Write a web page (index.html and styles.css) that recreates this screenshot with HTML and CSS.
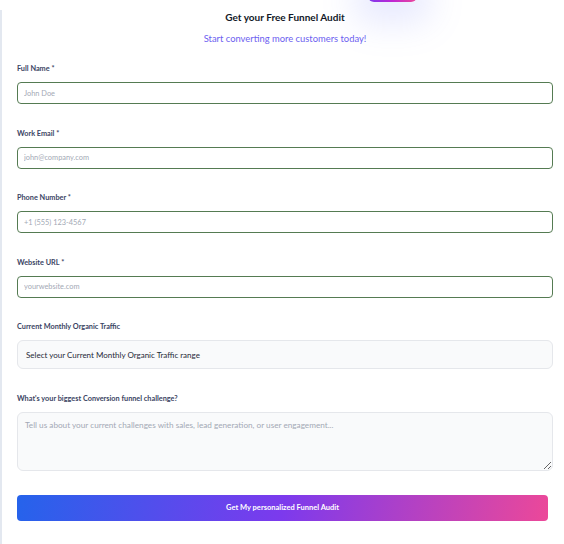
FILE: index.html
```html
<!DOCTYPE html>
<html lang="en">
<head>
<meta charset="utf-8">
<title>Get your Free Funnel Audit</title>
<link rel="stylesheet" href="styles.css">
</head>
<body>
<div class="glow"></div>
<div class="page">
  <div class="card">
    <header class="header">
      <h1 class="title">Get your Free Funnel Audit</h1>
      <p class="subtitle">Start converting more customers today!</p>
    </header>
    <form class="form">
      <div class="field">
        <label class="label">Full Name *</label>
        <input class="input" type="text" placeholder="John Doe">
      </div>
      <div class="field">
        <label class="label">Work Email *</label>
        <input class="input" type="email" placeholder="john@company.com">
      </div>
      <div class="field">
        <label class="label">Phone Number *</label>
        <input class="input" type="tel" placeholder="+1 (555) 123-4567">
      </div>
      <div class="field">
        <label class="label">Website URL *</label>
        <input class="input" type="text" placeholder="yourwebsite.com">
      </div>
      <div class="field">
        <label class="label">Current Monthly Organic Traffic</label>
        <select class="select">
          <option>Select your Current Monthly Organic Traffic range</option>
        </select>
      </div>
      <div class="field">
        <label class="label">What's your biggest Conversion funnel challenge?</label>
        <textarea class="textarea" placeholder="Tell us about your current challenges with sales, lead generation, or user engagement..."></textarea>
      </div>
      <button class="submit" type="button">Get My personalized Funnel Audit</button>
    </form>
  </div>
</div>
</body>
</html>
```

FILE: styles.css
```css
* { box-sizing: border-box; }
html, body { margin: 0; padding: 0; background: #ffffff; }
body { font-family: Lato, "Open Sans", "Liberation Sans", sans-serif; color: #1f2937; position: relative; overflow: hidden; height: 544px; }

.glow {
  position: absolute;
  left: 368px;
  top: -22px;
  width: 49px;
  height: 24px;
  border-radius: 6px;
  background: linear-gradient(90deg, #7c3aed, #c026d3, #ec4899);
  box-shadow: 0 8px 34px 14px rgba(129, 140, 248, 0.18);
}

.page { padding-top: 10px; }

.card {
  border-left: 2px solid #e3e8f0;
  padding: 0 11px 30px 15px;
  min-height: 540px;
}

.header { text-align: center; }
.title {
  margin: 0;
  font-size: 10px;
  line-height: 14px;
  font-weight: 700;
  color: #111827;
}
.subtitle {
  margin: 8px 0 0;
  font-size: 9.4px;
  line-height: 14px;
  color: #6d5ff0;
}

.form {
  display: flex;
  flex-direction: column;
  gap: 24.6px;
  margin-top: 18px;
}

.field { display: flex; flex-direction: column; gap: 8px; }

.label {
  font-size: 7.3px;
  line-height: 10px;
  font-weight: 700;
  color: #3a4463;
}

.input {
  height: 22px;
  border: 1px solid #557b52;
  border-radius: 4px;
  padding: 0 6px;
  font-family: inherit;
  font-size: 7.4px;
  color: #1f2937;
  background: #ffffff;
  outline: none;
}
.input::placeholder { color: #a3a9b5; }

.select {
  appearance: none;
  -webkit-appearance: none;
  height: 29px;
  border: 1px solid #e5e7eb;
  border-radius: 6px;
  background: #f9fafb;
  padding: 0 8px;
  font-family: inherit;
  font-size: 8px;
  color: #1f2937;
  outline: none;
}

.textarea {
  height: 59px;
  border: 1px solid #e5e7eb;
  border-radius: 6px;
  background: #f9fafb;
  padding: 7px 7px;
  font-family: inherit;
  font-size: 8.2px;
  color: #1f2937;
  outline: none;
  resize: vertical;
  margin-bottom: -1px;
}
.textarea::placeholder { color: #a3a9b5; }

.submit {
  height: 26px;
  margin-right: 5px;
  padding: 0;
  border: none;
  border-radius: 4px;
  background: linear-gradient(100deg, #2563eb 0%, #7c3aed 50%, #ec4899 100%);
  color: #ffffff;
  font-family: inherit;
  font-size: 7.5px;
  font-weight: 700;
  cursor: pointer;
}
```
